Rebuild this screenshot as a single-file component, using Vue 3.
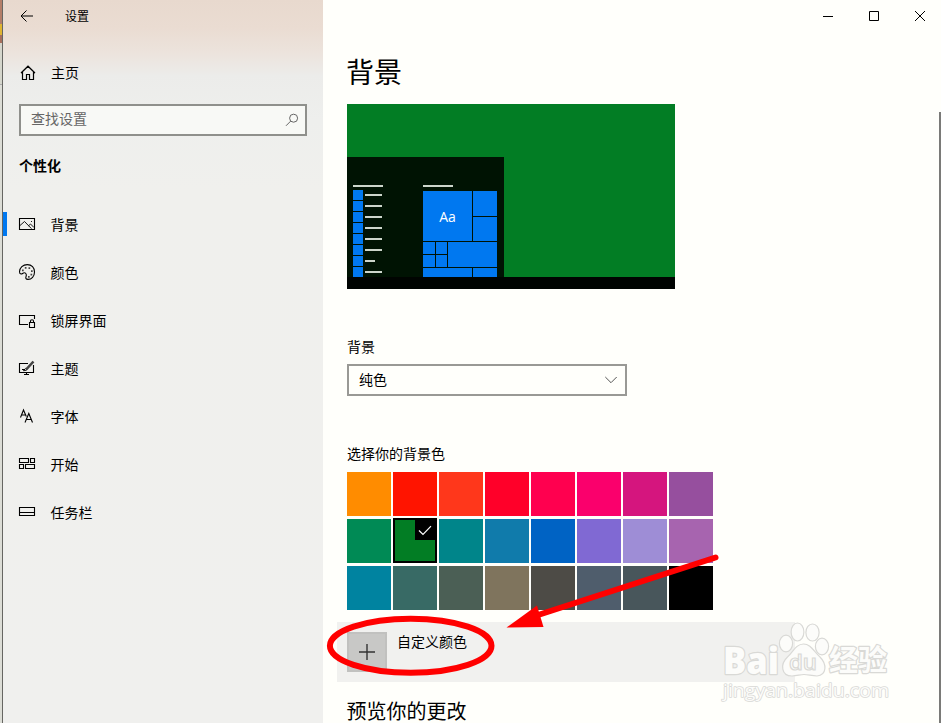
<template>
  <div class="window">
    <div class="desktop-edge">
      <i class="edge-top"></i>
      <i class="edge-icon"></i>
      <i class="edge-mid"></i>
      <i class="edge-low"></i>
    </div>

    <aside class="sidebar">
      <header class="title-bar">
        <svg class="back" width="14" height="14" viewBox="0 0 14 14">
          <path d="M1 7H13M6.500 1.500L1 7L6.500 12.500" />
        </svg>
        <span>设置</span>
      </header>
      <div class="home">
        <svg width="16" height="16" viewBox="0 0 16 16">
          <path d="M1 8L8 1.200L15 8M2.500 7V14.500H6.500V9.500H9.500V14.500H13.500V7" />
        </svg>
        <span>主页</span>
      </div>
      <div class="search">
        <span>查找设置</span>
        <svg width="14" height="14" viewBox="0 0 14 14">
          <circle cx="8.600" cy="5.200" r="4" />
          <path d="M5.700 8.100L1 12.800" />
        </svg>
      </div>
      <h3 class="group">个性化</h3>
      <nav>
        <a v-for="item in menu" :key="item.name" class="nav-item" :class="{ active: item.active }">
          <svg width="18" height="18" viewBox="0 0 18 18">
            <path :d="item.path" />
            <path v-if="item.thin" class="thin" :d="item.thin" />
            <path v-if="item.fill" class="solid" :d="item.fill" />
          </svg>
          <span>{{ item.name }}</span>
        </a>
      </nav>
    </aside>

    <main class="main">
      <div class="controls">
        <svg width="10" height="10" viewBox="0 0 10 10"><path d="M0 5.500H10" /></svg>
        <svg width="10" height="10" viewBox="0 0 10 10"><path d="M.5 .5H9.500V9.500H.5Z" /></svg>
        <svg width="10" height="10" viewBox="0 0 10 10"><path d="M0 0L10 10M10 0L0 10" /></svg>
      </div>
      <h1>背景</h1>

      <div class="preview">
        <div class="start">
          <div class="apps">
            <i class="bar"></i>
            <div v-for="n in 8" :key="n" class="app">
              <b></b><i :class="{ short: n === 7 }"></i>
            </div>
          </div>
          <div class="pinned">
            <i class="bar"></i>
            <div class="tiles">
              <div class="big">Aa</div>
              <div></div>
              <div></div>
              <div></div>
              <div></div>
              <div class="wide"></div>
              <div></div>
              <div></div>
              <div class="half"></div>
              <div></div>
            </div>
          </div>
        </div>
        <div class="taskbar"></div>
      </div>

      <div class="label label-bg">背景</div>
      <div class="select">
        <span>纯色</span>
        <svg width="12" height="8" viewBox="0 0 12 8"><path d="M.3 1L6 6.700L11.700 1" /></svg>
      </div>

      <div class="label label-color">选择你的背景色</div>
      <div class="swatches">
        <div
          v-for="color in colors"
          :key="color"
          class="swatch"
          :class="{ selected: color === current }"
          :style="{ backgroundColor: color }"
        >
          <span v-if="color === current" class="check">
            <svg width="14" height="11" viewBox="0 0 14 11"><path d="M1 5.500L5 9.500L13 1.200" /></svg>
          </span>
        </div>
      </div>

      <div class="custom">
        <button class="plus">
          <svg width="16" height="16" viewBox="0 0 16 16"><path d="M0 8H16M8 0V16" /></svg>
        </button>
        <span>自定义颜色</span>
      </div>
      <h2>预览你的更改</h2>
    </main>

    <div class="scrollbar"></div>

    <svg class="marks" width="941" height="723" viewBox="0 0 941 723">
      <g class="watermark">
        <text x="723" y="674" class="wm-big" textLength="56" lengthAdjust="spacingAndGlyphs">Bai</text>
        <ellipse cx="786" cy="643.500" rx="6.600" ry="8.300" />
        <ellipse cx="797.500" cy="632" rx="6.400" ry="9" />
        <ellipse cx="812.500" cy="632.500" rx="6.600" ry="8.500" />
        <ellipse cx="822" cy="646.500" rx="6.600" ry="8.300" />
        <path d="M803.500 644C796 644 793 652 787.500 657C780 664 781 676 792 676C797 676 800 674.500 804 674.500S812 676 817 676C827 675 827 664 820 657C814 652 811 644 803.500 644Z" />
        <text x="789" y="670" class="wm-du" textLength="28" lengthAdjust="spacingAndGlyphs">du</text>
        <text x="829" y="671" class="wm-cn">经验</text>
        <text x="723" y="697" class="wm-url" textLength="166" lengthAdjust="spacingAndGlyphs">jingyan.baidu.com</text>
      </g>
      <g class="annotation">
        <ellipse cx="410.700" cy="645.800" rx="80.800" ry="27" />
        <path d="M715.500 557.500L535 616" />
        <path class="head" d="M506.500 627.500L537 605.500L543.500 627Z" />
      </g>
    </svg>
  </div>
</template>

<script setup>
import { ref } from 'vue'

const menu = [
  {
    name: '背景',
    active: true,
    path: 'M1.500 3.500H16.500V14.500H1.500Z',
    thin: 'M2 10.500L6.500 6.500L13.500 13.700M10.500 10.800L12.500 9L16 12.500M13 6.500H14'
  },
  {
    name: '颜色',
    path: 'M1.500 8.800C1.600 4.700 5 1.600 9.300 1.600C13.700 1.600 16.500 4.800 16.500 9C16.500 13.400 13.600 16.400 10 16.400C7.900 16.400 7.400 15.300 8 13.800C8.700 12 8.300 9.800 6.300 9.800C4.800 9.800 4.300 11.200 3 11C1.900 10.800 1.500 9.800 1.500 8.800Z',
    fill: 'M4 6.500h1.700v1.700H4ZM6.800 4h1.700v1.700H6.800ZM10.500 4.300h1.700V6h-1.700ZM13 7.300h1.700V9H13ZM12.500 10.800h1.700v1.700h-1.700ZM10 13h1.700v1.700H10Z'
  },
  {
    name: '锁屏界面',
    path: 'M10 13.500H1.500V4.500H16.500V8M11.500 11.500H16.500V16.500H11.500ZM12.500 11.500V10Q12.500 8.800 14 8.800T15.500 10V11.500'
  },
  {
    name: '主题',
    path: 'M10 4.500H1.500V13.500H15.500V6M8.500 13.500V15.500M6 15.500H11M4 10.500H7',
    thin: 'M6.300 10.500Q8 8.600 9 10T5.500 11.800L6.300 10.500',
    fill: 'M7.600 9.300L14.500 1.800L16.400 3.200L9.400 11Z'
  },
  {
    name: '字体',
    path: 'M2.500 10.500L5.500 3L8.300 9.500M3.500 8H7.500M7 15.500L10.800 6.500L14.500 15.500M8.500 12.500H13.200'
  },
  {
    name: '开始',
    path: 'M1.500 3.500H10.500V7.500H1.500ZM12.500 3.500H16.500V7.500H12.500ZM1.500 9.500H5.500V13.500H1.500ZM7.500 9.500H16.500V13.500H7.500Z'
  },
  {
    name: '任务栏',
    path: 'M1.500 4.500H16.500V12.500H1.500ZM1.500 9.500H16.500'
  }
]

const colors = [
  '#ff8c00', '#ff1400', '#ff371b', '#ff0029', '#ff004f', '#fa006c', '#d5157e', '#964f9e',
  '#008a55', '#027d24', '#00858a', '#107bab', '#0063c4', '#8069d3', '#9e8dd6', '#a764af',
  '#0083a0', '#386a65', '#4b5f55', '#7f745d', '#4d4b46', '#4f5d6c', '#48565b', '#000000'
]

const current = ref('#027d24')
</script>

<style>
body {
  margin: 0;
  overflow: hidden;
}
</style>

<style scoped>
.window {
  position: relative;
  display: flex;
  width: 941px;
  height: 723px;
  overflow: hidden;
  box-sizing: border-box;
  background: #fffffb;
  color: #000;
  font-family: "Noto Sans CJK SC", sans-serif;
  font-size: 14px;
  line-height: 20px;
}

svg {
  display: block;
  flex: none;
  fill: none;
  stroke: #000;
  stroke-width: 1;
}

h1,
h2,
h3 {
  margin: 0;
  font-weight: 400;
}

.desktop-edge {
  display: flex;
  flex-direction: column;
  width: 2px;
  border-right: 1px solid #666662;
  background: #dcddd6;
}

.edge-top {
  height: 24px;
  background: #b47e68;
}

.edge-icon {
  height: 11px;
  background: #dfb431;
}

.edge-mid {
  height: 8px;
  background: #a86f5c;
}

.edge-low {
  height: 41px;
  border-bottom: 1px solid #aaa;
  background: #d5d6cc;
}

/* sidebar */
.sidebar {
  width: 320px;
  flex: none;
  background: linear-gradient(#e8d9ce 0, #eadcd2 28px, #ece3dc 52px, #ececea 76px, #eeefed 120px, #f0f0ed 190px, #f0f0ee 100%);
}

.title-bar {
  display: flex;
  align-items: center;
  height: 32px;
  padding-left: 17px;
  gap: 31px;
  font-size: 12px;
}

.home {
  display: flex;
  align-items: center;
  height: 46px;
  margin-top: 17px;
  padding: 0 0 2px 17px;
  gap: 15px;
}

.home svg {
  margin-top: 1px;
  stroke-width: 1.2;
}

.home span {
  padding-bottom: 1px;
}

.search {
  display: flex;
  align-items: center;
  justify-content: space-between;
  width: 288px;
  height: 32px;
  margin: 7px 0 0 16px;
  padding: 0 6px 2px 10px;
  box-sizing: border-box;
  border: 2px solid #8f908c;
  background: #f8f9f6;
  color: #666;
}

.search span {
  padding-bottom: 2px;
}

.search svg {
  margin-top: 1px;
  stroke: #666;
}

.group {
  margin: 19px 0 25px 16px;
  font-size: 14px;
  font-weight: 700;
}

.nav-item {
  display: flex;
  align-items: center;
  height: 48px;
  padding-left: 15px;
  gap: 14.500px;
}

.nav-item.active {
  background: linear-gradient(#0078f0, #0078f0) 0 12px / 4px 24px no-repeat;
}

.nav-item svg {
  stroke-width: 1.1;
}

.nav-item .thin {
  stroke-width: 0.9;
}

.nav-item .solid {
  fill: #444;
  stroke: none;
}

/* main */
.main {
  flex: 1;
  padding-left: 24px;
}

.controls {
  display: flex;
  justify-content: flex-end;
  align-items: center;
  height: 32px;
  padding-right: 14px;
  gap: 36px;
}

h1 {
  height: 40px;
  margin: 20px 0 12px -1px;
  font-size: 28px;
  line-height: 39px;
}

.preview {
  display: flex;
  flex-direction: column;
  justify-content: flex-end;
  width: 328px;
  height: 185px;
  background: #027d24;
}

.start {
  display: flex;
  gap: 40px;
  width: 157px;
  height: 120px;
  padding: 28px 0 0 6px;
  box-sizing: border-box;
  background: #001303;
}

.taskbar {
  height: 12px;
  background: #000401;
}

.bar {
  display: block;
  width: 30px;
  height: 2px;
  background: #ccd5cb;
}

.apps {
  width: 30px;
}

.apps .bar {
  margin-bottom: 3px;
}

.app {
  display: flex;
  align-items: center;
  gap: 2px;
  height: 10px;
  margin-bottom: 1px;
}

.app b {
  width: 10px;
  height: 10px;
  background: #0078f0;
}

.app i {
  width: 17px;
  height: 2px;
  background: #ccd5cb;
}

.app i.short {
  width: 10px;
}

.pinned .bar {
  margin-bottom: 4px;
}

.tiles {
  display: grid;
  grid-template-columns: 12px 11px 24px 24px;
  grid-template-rows: 25px 24px 12px 12px 9px;
  gap: 1px;
}

.tiles div {
  background: #0078f0;
}

.tiles .big {
  display: flex;
  grid-area: 1 / 1 / 3 / 4;
  align-items: center;
  justify-content: center;
  padding-top: 2px;
  color: #fff;
  font-family: "Open Sans", sans-serif;
  font-size: 14px;
}

.tiles div:nth-child(2) {
  grid-area: 1 / 4;
}

.tiles div:nth-child(3) {
  grid-area: 2 / 4;
}

.tiles .wide {
  grid-area: 3 / 3 / 5 / 5;
}

.tiles .half {
  grid-column: 1 / 4;
}

.label-bg {
  margin-top: 47px;
}

.select {
  display: flex;
  align-items: center;
  justify-content: space-between;
  width: 280px;
  height: 32px;
  margin-top: 8px;
  padding: 0 8px 0 10px;
  box-sizing: border-box;
  border: 2px solid #999995;
}

.select span {
  padding-bottom: 2px;
}

.select svg {
  stroke: #555;
}

.label-color {
  margin-top: 47px;
}

.swatches {
  display: grid;
  grid-template-columns: repeat(8, 44px);
  grid-auto-rows: 44px;
  gap: 3px 2px;
  margin-top: 9px;
}

.swatch.selected {
  display: flex;
  justify-content: flex-end;
  height: 45px;
  margin-top: -1px;
  box-sizing: border-box;
  border: 2px solid #000;
}

.check {
  display: flex;
  align-items: center;
  justify-content: center;
  width: 20px;
  height: 20px;
  background: #000;
}

.check svg {
  stroke: #fff;
  stroke-width: 1.2;
}

.custom {
  display: flex;
  gap: 10px;
  width: 458px;
  height: 60px;
  margin: 12px 0 0 -10px;
  padding: 9px 10px 10px;
  box-sizing: border-box;
  background: #f1f1ef;
}

.plus {
  display: flex;
  align-items: center;
  justify-content: center;
  width: 40px;
  height: 40px;
  margin-top: 1px;
  padding: 0;
  border: 2px solid #c1c1bf;
  background: #c8c8c6;
}

.plus svg {
  stroke: #333;
  stroke-width: 1.4;
}

h2 {
  margin: 18px 0 0 -0.500px;
  font-size: 20px;
  line-height: 22px;
}

.scrollbar {
  width: 2px;
  height: 611px;
  margin-top: 112px;
  background: #7a7a78;
}

/* overlay drawn over the whole window */
.marks {
  position: absolute;
  top: 0;
  left: 0;
}

.annotation {
  stroke: #ff0000;
  stroke-width: 6;
  stroke-linecap: round;
}

.annotation .head {
  fill: #ff0000;
  stroke: none;
}

.watermark {
  fill: #fcfcfa;
  stroke: #d9d9d6;
  stroke-width: 1.2;
  font-family: "Open Sans", "Noto Sans CJK SC", sans-serif;
}

.wm-big {
  font-size: 37px;
  font-weight: 800;
  stroke-width: 2.4;
  stroke-linejoin: round;
  paint-order: stroke;
}

.wm-du {
  font-size: 22px;
  font-weight: 600;
}

.wm-cn {
  font-size: 29px;
  font-weight: 700;
  stroke-width: 2.4;
  stroke-linejoin: round;
  paint-order: stroke;
}

.wm-url {
  font-size: 19px;
  stroke-width: 1.6;
  stroke-linejoin: round;
  paint-order: stroke;
}
</style>
